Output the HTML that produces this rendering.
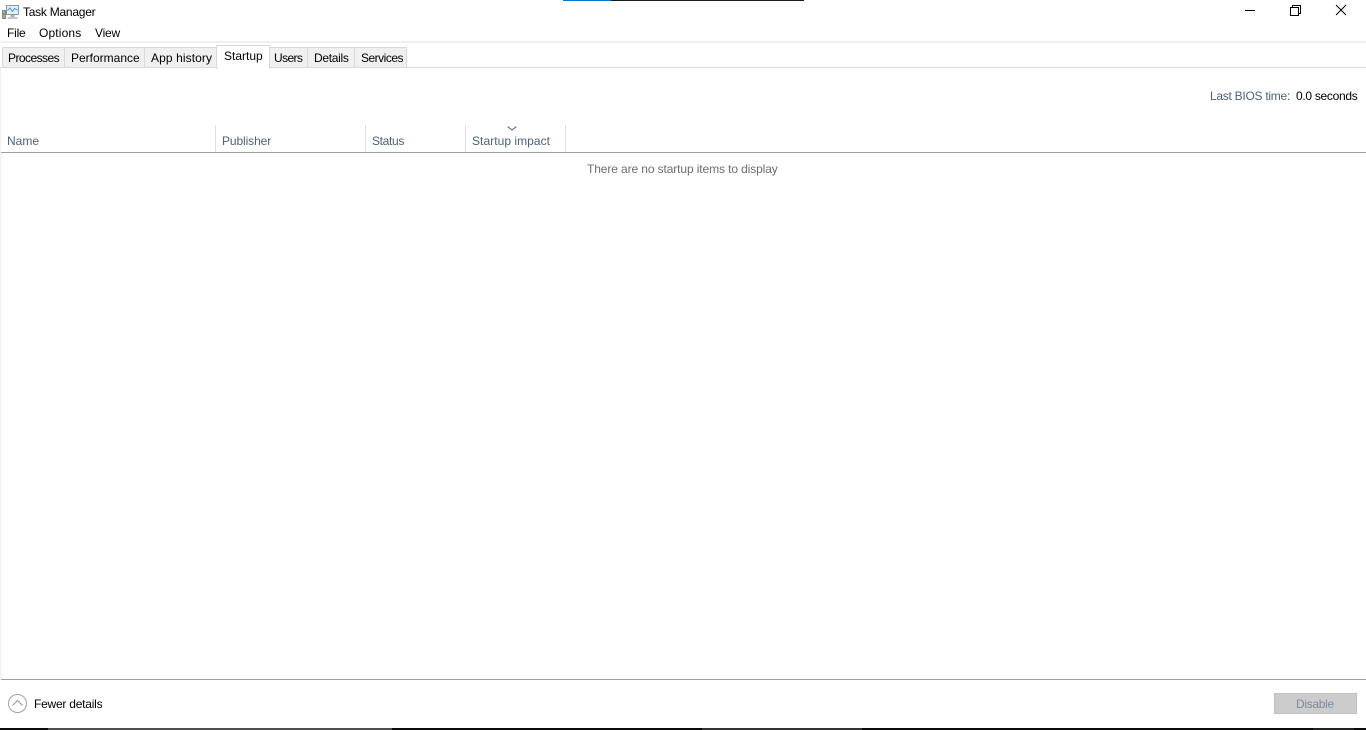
<!DOCTYPE html>
<html><head><meta charset="utf-8"><style>
html,body{margin:0;padding:0;width:1366px;height:730px;overflow:hidden;background:#fff}
body{position:relative;font-family:"Liberation Sans",sans-serif;font-size:12px;color:#000}
.t{position:absolute;white-space:nowrap;line-height:16px;height:16px}
.b{position:absolute}
.tab{position:absolute;top:47px;height:19px;background:#f0f0f0;border:1px solid #d9d9d9;border-bottom:0;box-sizing:content-box}
.h{color:#4c607a}
</style></head><body>
<div class="b" style="left:563px;top:0;width:48px;height:1px;background:#0078d7"></div>
<div class="b" style="left:611px;top:0;width:193px;height:1px;background:#1a1a1a"></div>

<svg class="b" style="left:2px;top:4px" width="17" height="16" viewBox="0 0 17 16">
<rect x="0.5" y="6.500" width="3" height="8" fill="#a3aca0" stroke="#7f867d" stroke-width="1"/>
<rect x="1" y="9" width="2" height="2" fill="#6fae4f"/>
<rect x="4.500" y="1.500" width="12" height="9" fill="#e3eff9" stroke="#8b97a1"/>
<path d="M5.500 6.500 L8 4 L10.500 7.500 L12.500 4.500 L15.500 6" fill="none" stroke="#4c97d4" stroke-width="1"/>
<rect x="8.500" y="11" width="4" height="2" fill="#a9b0b5"/>
<rect x="5.500" y="13" width="10" height="2" fill="#c3c8cc"/>
</svg>
<div class="t" style="left:23px;top:4px;letter-spacing:-.25px">Task Manager</div>

<svg class="b" style="left:1240px;top:0" width="115" height="20" viewBox="0 0 115 20" fill="none" stroke="#000" stroke-width="1">
<path d="M5 10.500H15"/>
<path d="M50.500 7.500H58.500V15.500H50.500Z"/>
<path d="M52.500 7.500V5.500H60.500V13.500H58.500"/>
<path d="M96 5L106 15M106 5L96 15"/>
</svg>

<div class="t" style="left:7px;top:25px;letter-spacing:-.2px">File</div>
<div class="t" style="left:39px;top:25px;letter-spacing:.15px">Options</div>
<div class="t" style="left:95px;top:25px;letter-spacing:-.2px">View</div>

<div class="b" style="left:0;top:41px;width:1366px;height:2px;background:#f0f0f0"></div>
<div class="b" style="left:0;top:67px;width:1366px;height:1px;background:#d9d9d9"></div>

<div class="tab" style="left:2px;width:61px"></div>
<div class="tab" style="left:64px;width:79px"></div>
<div class="tab" style="left:144px;width:71px"></div>
<div class="tab" style="left:269px;width:37px"></div>
<div class="tab" style="left:307px;width:46px"></div>
<div class="tab" style="left:354px;width:51px"></div>
<div class="b" style="left:216px;top:45px;width:52px;height:23px;background:#fff;border:1px solid #d9d9d9;border-bottom:0"></div>

<div class="t" style="left:8px;top:50px;letter-spacing:-.55px">Processes</div>
<div class="t" style="left:71px;top:50px">Performance</div>
<div class="t" style="left:151px;top:50px;letter-spacing:.1px">App history</div>
<div class="t" style="left:224px;top:48px">Startup</div>
<div class="t" style="left:274px;top:50px;letter-spacing:-.6px">Users</div>
<div class="t" style="left:314px;top:50px;letter-spacing:-.3px">Details</div>
<div class="t" style="left:361px;top:50px;letter-spacing:-.5px">Services</div>

<div class="b" style="left:0;top:68px;width:1px;height:612px;background:#f0f0f0"></div>

<div class="t h" style="left:1210px;top:88px;letter-spacing:-.27px">Last BIOS time:</div>
<div class="t" style="left:1296px;top:88px;letter-spacing:-.3px">0.0 seconds</div>

<div class="t h" style="left:7px;top:133px">Name</div>
<div class="t h" style="left:222px;top:133px;letter-spacing:-.1px">Publisher</div>
<div class="t h" style="left:372px;top:133px;letter-spacing:-.33px">Status</div>
<div class="t h" style="left:472px;top:133px;letter-spacing:.05px">Startup impact</div>
<svg class="b" style="left:506px;top:125px" width="12" height="7" viewBox="0 0 12 7"><path d="M1.500 1.500L6 5L10.500 1.500" fill="none" stroke="#4c607a" stroke-width="1"/></svg>

<div class="b" style="left:215px;top:125px;width:1px;height:27px;background:#e0e0e0"></div>
<div class="b" style="left:365px;top:125px;width:1px;height:27px;background:#e0e0e0"></div>
<div class="b" style="left:465px;top:125px;width:1px;height:27px;background:#e0e0e0"></div>
<div class="b" style="left:565px;top:125px;width:1px;height:27px;background:#e0e0e0"></div>
<div class="b" style="left:1px;top:152px;width:1365px;height:1px;background:#a0a0a0"></div>

<div class="t" style="left:587px;top:161px;color:#6d6d6d;letter-spacing:-.11px">There are no startup items to display</div>

<div class="b" style="left:1px;top:679px;width:1365px;height:1px;background:#a0a0a0"></div>

<svg class="b" style="left:7px;top:693px" width="21" height="21" viewBox="0 0 21 21" fill="none" stroke="#a0a0a0" stroke-width="1"><circle cx="10.500" cy="10.500" r="9"/><path d="M5.500 12.500L10.500 7.500L15.500 12.500" stroke-width="1.200"/></svg>
<div class="t" style="left:34px;top:696px;letter-spacing:-.23px">Fewer details</div>

<div class="b" style="left:1274px;top:693px;width:81px;height:19px;background:#cccccc;border:1px solid #bfbfbf"></div>
<div class="t" style="left:1296px;top:696px;color:#7f8a9c;letter-spacing:-.3px">Disable</div>

<div class="b" style="left:0;top:728px;width:1366px;height:2px;background:#0a0a0a"></div>
<div class="b" style="left:48px;top:728px;width:344px;height:2px;background:#4f4f4f"></div>
<div class="b" style="left:702px;top:728px;width:160px;height:2px;background:#333"></div>
<div class="b" style="left:1313px;top:728px;width:41px;height:2px;background:#222"></div>
</body></html>
